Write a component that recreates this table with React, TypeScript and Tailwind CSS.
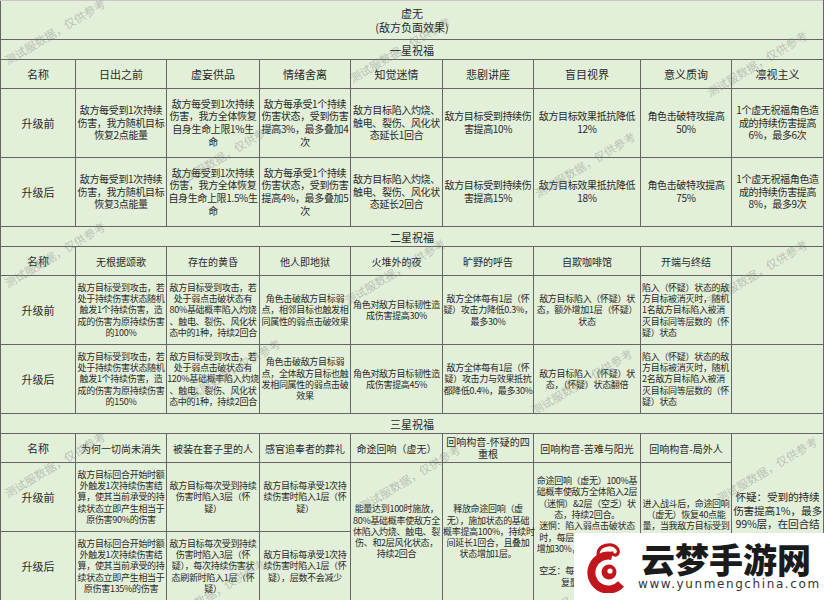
import React from "react";

type Cell = { lines: string[]; left?: boolean; rowSpan?: number };

const bd = "border border-[#666] p-0 align-middle";
const big = "text-[10px] leading-[12.7px] tracking-[-0.35px]";
const small = "text-[9px] leading-[11.3px] tracking-[-0.3px]";

const star1Head = ["名称", "日出之前", "虚妄供品", "情绪舍离", "知觉迷情", "悲剧讲座", "盲目视界", "意义质询", "凛视主义"];
const star1Before: Cell[] = [
  { lines: ["敌方每受到1次持续", "伤害，我方随机目标", "恢复2点能量"] },
  { lines: ["敌方每受到1次持续", "伤害，我方全体恢复", "自身生命上限1%生", "命"] },
  { lines: ["敌方每承受1个持续", "伤害状态，受到伤害", "提高3%，最多叠加4", "次"] },
  { lines: ["敌方目标陷入灼烧、", "触电、裂伤、风化状", "态延长1回合"] },
  { lines: ["敌方目标受到持续伤", "害提高10%"] },
  { lines: ["敌方目标效果抵抗降低", "12%"] },
  { lines: ["角色击破特攻提高", "50%"] },
  { lines: ["1个虚无祝福角色造", "成的持续伤害提高", "6%，最多6次"] },
];
const star1After: Cell[] = [
  { lines: ["敌方每受到1次持续", "伤害，我方随机目标", "恢复3点能量"] },
  { lines: ["敌方每受到1次持续", "伤害，我方全体恢复", "自身生命上限1.5%生", "命"] },
  { lines: ["敌方每承受1个持续", "伤害状态，受到伤害", "提高4%，最多叠加5", "次"] },
  { lines: ["敌方目标陷入灼烧、", "触电、裂伤、风化状", "态延长2回合"] },
  { lines: ["敌方目标受到持续伤", "害提高15%"] },
  { lines: ["敌方目标效果抵抗降低", "18%"] },
  { lines: ["角色击破特攻提高", "75%"] },
  { lines: ["1个虚无祝福角色造", "成的持续伤害提高", "8%，最多9次"] },
];

const star2Head = ["名称", "无根据颂歌", "存在的黄昏", "他人即地狱", "火堆外的夜", "旷野的呼告", "自欺咖啡馆", "开端与终结", ""];
const star2Before: Cell[] = [
  { lines: ["敌方目标受到攻击，若", "处于持续伤害状态随机", "触发1个持续伤害，造", "成的伤害为原持续伤害", "的100%"] },
  { lines: ["敌方目标受到攻击，若", "处于弱点击破状态有", "80%基础概率陷入灼烧", "、触电、裂伤、风化状", "态中的1种，持续2回合"] },
  { lines: ["角色击破敌方目标弱", "点，相邻目标也触发相", "同属性的弱点击破效果"] },
  { lines: ["角色对敌方目标韧性造", "成伤害提高30%"] },
  { lines: ["敌方全体每有1层（怀", "疑）攻击力降低0.3%，", "最多30%"] },
  { lines: ["敌方目标陷入（怀疑）状", "态，额外增加1层（怀疑）", "状态"] },
  { lines: ["陷入（怀疑）状态的敌", "方目标被消灭时，随机", "1名敌方目标陷入被消", "灭目标同等层数的（怀", "疑）状态"], left: true },
  { lines: [] },
];
const star2After: Cell[] = [
  { lines: ["敌方目标受到攻击，若", "处于持续伤害状态随机", "触发1个持续伤害，造", "成的伤害为原持续伤害", "的150%"] },
  { lines: ["敌方目标受到攻击，若", "处于弱点击破状态有", "120%基础概率陷入灼烧", "、触电、裂伤、风化状", "态中的1种，持续2回合"] },
  { lines: ["角色击破敌方目标弱", "点，全体敌方目标也触", "发相同属性的弱点击破", "效果"] },
  { lines: ["角色对敌方目标韧性造", "成伤害提高45%"] },
  { lines: ["敌方全体每有1层（怀", "疑）攻击力与效果抵抗", "都降低0.4%，最多30%"] },
  { lines: ["敌方目标陷入（怀疑）状", "态，（怀疑）状态翻倍"] },
  { lines: ["陷入（怀疑）状态的敌", "方目标被消灭时，随机", "2名敌方目标陷入被消", "灭目标同等层数的（怀", "疑）状态"], left: true },
  { lines: [] },
];

const star3Before: Cell[] = [
  { lines: ["敌方目标回合开始时额", "外触发1次持续伤害结", "算，使其当前承受的持", "续状态立即产生相当于", "原伤害90%的伤害"] },
  { lines: ["敌方目标每次受到持续", "伤害时陷入3层（怀", "疑）"] },
  { lines: ["敌方目标每承受1次持", "续伤害时陷入1层（怀", "疑）"] },
  { lines: ["能量达到100时施放，", "80%基础概率使敌方全", "体陷入灼烧、触电、裂", "伤、和2层风化状态，", "持续2回合"], rowSpan: 2 },
  { lines: ["释放命途回响（虚", "无），施加状态的基础", "概率提高100%，持续时", "间延长1回合，且叠加", "状态增加1层。"], rowSpan: 2 },
  {
    lines: [
      "命途回响（虚无）100%基",
      "础概率使敌方全体陷入2层",
      "（迷惘）&2层（空乏）状",
      "态，持续2回合。",
      "迷惘：陷入弱点击破状态",
      "时，每层迷惘使击破伤害",
      "增加30%，最多叠加3层迷",
      "惘。",
      "空乏：每层空乏使能量回",
      "复量降低10%",
    ],
    rowSpan: 2,
  },
  { lines: ["进入战斗后，命途回响", "（虚无）恢复40点能", "量，当我敌方目标受到", "持续伤害时，命途回响", "（虚无）额外恢复1点", "能量"], rowSpan: 2 },
];
const star3After: Cell[] = [
  { lines: ["敌方目标回合开始时额", "外触发1次持续伤害结", "算，使其当前承受的持", "续状态立即产生相当于", "原伤害135%的伤害"] },
  { lines: ["敌方目标每次受到持续", "伤害时陷入3层（怀", "疑），每次持续伤害状", "态刷新时陷入1层（怀", "疑）"] },
  { lines: ["敌方目标每承受1次持", "续伤害时陷入1层（怀", "疑），层数不会减少"] },
];

const marks = [
  [55, 32], [400, 50], [757, 64],
  [225, 155], [585, 165],
  [55, 255], [395, 272], [757, 273],
  [230, 372], [582, 382],
  [55, 465], [410, 478], [767, 470],
  [215, 592], [570, 600],
];

function Lines({ lines, left }: { lines: string[]; left?: boolean }) {
  return (
    <div className={left ? "text-left pl-[1px]" : "text-center"}>
      {lines.map((l, i) => (
        <div key={i} className="whitespace-nowrap">
          {l}
        </div>
      ))}
    </div>
  );
}

function Section({ label }: { label: string }) {
  return (
    <tr>
      <td colSpan={9} className={`${bd} h-[20px] text-center text-[11px] leading-[14px]`}>
        {label}
      </td>
    </tr>
  );
}

function Head({ names, size }: { names: string[]; size: string }) {
  return (
    <tr>
      {names.map((n, i) => (
        <td key={i} className={`${bd} h-[29px] text-center ${i === 0 ? "text-[11px]" : size}`}>
          {n}
        </td>
      ))}
    </tr>
  );
}

function Row({ label, cells, size, height }: { label: string; cells: Cell[]; size: string; height: string }) {
  return (
    <tr>
      <td className={`${bd} ${height} text-center text-[11px]`}>{label}</td>
      {cells.map((c, i) => (
        <td key={i} rowSpan={c.rowSpan} className={`${bd} ${size}`}>
          <Lines lines={c.lines} left={c.left} />
        </td>
      ))}
    </tr>
  );
}

function Logo() {
  return (
    <div className="absolute right-0 bottom-0 w-[250px] h-[67px] bg-white flex items-start pl-[5px] pt-[8px] gap-[10px]">
      <svg width="52" height="52" viewBox="0 0 52 52" className="shrink-0">
        <path d="M33 15 A 17 17 0 1 0 42 43" stroke="#c1161c" strokeWidth="8" fill="none" />
        <circle cx="30" cy="31" r="7.5" fill="#c1161c" />
        <circle cx="31" cy="30" r="2.6" fill="#fff" />
        <path d="M19 13 C 19 4, 33 1, 38 7 C 42 12, 36 17, 33 12" stroke="#c1161c" strokeWidth="3.2" fill="none" strokeLinecap="round" />
      </svg>
      <div className="flex flex-col">
        <div className="text-[34px] leading-[36px] font-black text-[#1b1b1b] font-['Noto_Sans_CJK_SC',sans-serif]">云梦手游网</div>
        <div className="text-[12px] leading-[14px] tracking-[1.6px] text-[#333] font-['DejaVu_Sans',sans-serif] -ml-[3px]">
          www.yunmengchina.com
        </div>
      </div>
    </div>
  );
}

export default function App() {
  return (
    <div className="relative w-[824px] h-[600px] overflow-hidden bg-white font-['Noto_Sans_CJK_SC',sans-serif] text-[#2a2a2a]">
      <table className="w-[823px] table-fixed border-collapse bg-[#e2efd9]">
        <colgroup>
          <col className="w-[75px]" />
          <col className="w-[91px]" />
          <col className="w-[93px]" />
          <col className="w-[91px]" />
          <col className="w-[92px]" />
          <col className="w-[91px]" />
          <col className="w-[107px]" />
          <col className="w-[91px]" />
          <col className="w-[92px]" />
        </colgroup>
        <tbody>
          <tr>
            <td colSpan={9} className="border border-[#666] border-t-[#c8c8c8] h-[39px] text-center text-[11px] leading-[14px]">
              <div>虚无</div>
              <div>(敌方负面效果)</div>
            </td>
          </tr>
          <Section label="一星祝福" />
          <Head names={star1Head} size="text-[11px]" />
          <Row label="升级前" cells={star1Before} size={big} height="h-[69px]" />
          <Row label="升级后" cells={star1After} size={big} height="h-[69px]" />
          <Section label="二星祝福" />
          <Head names={star2Head} size="text-[10px]" />
          <Row label="升级前" cells={star2Before} size={small} height="h-[69px]" />
          <Row label="升级后" cells={star2After} size={small} height="h-[69px]" />
          <Section label="三星祝福" />
          <tr>
            <td className={`${bd} h-[29px] text-center text-[11px]`}>名称</td>
            <td className={`${bd} text-center text-[10px]`}>为何一切尚未消失</td>
            <td className={`${bd} text-center text-[10px]`}>被装在套子里的人</td>
            <td className={`${bd} text-center text-[10px]`}>感官追奉者的葬礼</td>
            <td className={`${bd} text-center text-[10px]`}>命途回响（虚无）</td>
            <td className={`${bd} text-center text-[10px] leading-[12px]`}>
              <div>回响构音-怀疑的四</div>
              <div>重根</div>
            </td>
            <td className={`${bd} text-center text-[10px]`}>回响构音-苦难与阳光</td>
            <td className={`${bd} text-center text-[10px]`}>回响构音-局外人</td>
            <td rowSpan={3} className={`${bd} text-center text-[10.7px] leading-[13.5px] tracking-[-0.2px]`}>
              <Lines lines={["怀疑：受到的持续", "伤害提高1%，最多", "99%层，在回合结", "束时减少1层"]} />
            </td>
          </tr>
          <Row label="升级前" cells={star3Before} size={small} height="h-[69px]" />
          <Row label="升级后" cells={star3After} size={small} height="h-[69px]" />
        </tbody>
      </table>

      {marks.map(([x, y], i) => (
        <span
          key={i}
          className="pointer-events-none absolute whitespace-nowrap text-[11.5px] text-[#7a7a7a]/40 -translate-x-1/2 -translate-y-1/2 -rotate-[31deg]"
          style={{ left: x, top: y }}
        >
          测试服数据，仅供参考
        </span>
      ))}

      <Logo />
    </div>
  );
}
